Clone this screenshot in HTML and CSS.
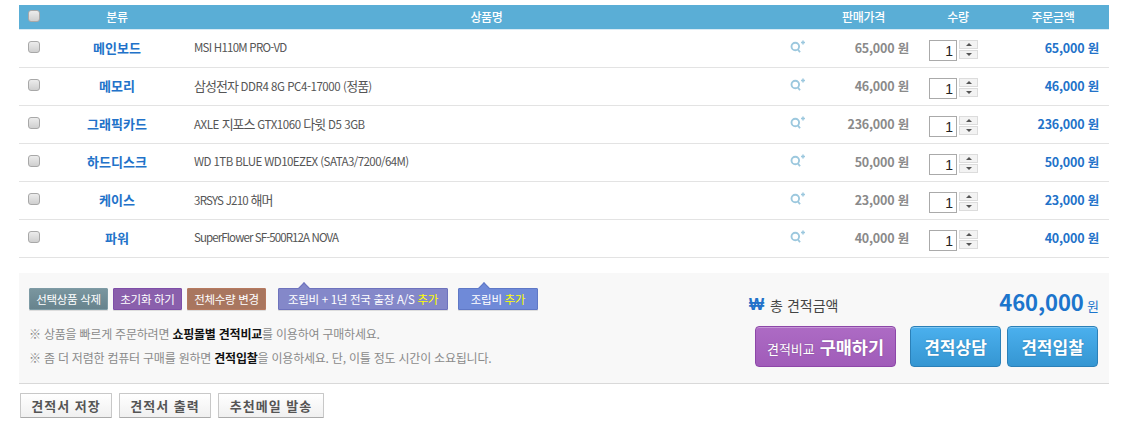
FILE: index.html
```html
<!DOCTYPE html>
<html lang="ko">
<head>
<meta charset="utf-8">
<title>견적서</title>
<link rel="stylesheet" href="styles.css">
</head>
<body>
<main class="page">
  <div class="row head">
    <div class="c"><input type="checkbox" class="chk" aria-label="전체 선택"></div>
    <div class="c">분류</div>
    <div class="c">상품명</div>
    <div></div>
    <div class="c">판매가격</div>
    <div class="c">수량</div>
    <div class="c">주문금액</div>
  </div>

  <div class="row item">
    <div class="c top"><input type="checkbox" class="chk"></div>
    <div class="c cat">메인보드</div>
    <div class="name">MSI H110M PRO-VD</div>
    <div class="c top"><svg class="zoom" viewBox="0 0 16 14"><circle cx="5.3" cy="6.5" r="3.8" /><path d="M7.8 9.3L10 12.2"/><path class="plus" d="M11 2.5H15M13 .5V4.5"/></svg></div>
    <div class="price">65,000 원</div>
    <div class="qty"><input class="num" value="1"><div class="spin"><span class="up"></span><span class="down"></span></div></div>
    <div class="total">65,000 원</div>
  </div>
  <div class="row item">
    <div class="c top"><input type="checkbox" class="chk"></div>
    <div class="c cat">메모리</div>
    <div class="name loose"><span class="ko">삼성전자</span> DDR4 8G PC4-17000 (<span class="ko">정품</span>)</div>
    <div class="c top"><svg class="zoom" viewBox="0 0 16 14"><circle cx="5.3" cy="6.5" r="3.8" /><path d="M7.8 9.3L10 12.2"/><path class="plus" d="M11 2.5H15M13 .5V4.5"/></svg></div>
    <div class="price">46,000 원</div>
    <div class="qty"><input class="num" value="1"><div class="spin"><span class="up"></span><span class="down"></span></div></div>
    <div class="total">46,000 원</div>
  </div>
  <div class="row item">
    <div class="c top"><input type="checkbox" class="chk"></div>
    <div class="c cat">그래픽카드</div>
    <div class="name loose">AXLE <span class="ko">지포스</span> GTX1060 <span class="ko">다윗</span> D5 3GB</div>
    <div class="c top"><svg class="zoom" viewBox="0 0 16 14"><circle cx="5.3" cy="6.5" r="3.8" /><path d="M7.8 9.3L10 12.2"/><path class="plus" d="M11 2.5H15M13 .5V4.5"/></svg></div>
    <div class="price">236,000 원</div>
    <div class="qty"><input class="num" value="1"><div class="spin"><span class="up"></span><span class="down"></span></div></div>
    <div class="total">236,000 원</div>
  </div>
  <div class="row item">
    <div class="c top"><input type="checkbox" class="chk"></div>
    <div class="c cat">하드디스크</div>
    <div class="name caps">WD 1TB BLUE WD10EZEX (SATA3/7200/64M)</div>
    <div class="c top"><svg class="zoom" viewBox="0 0 16 14"><circle cx="5.3" cy="6.5" r="3.8" /><path d="M7.8 9.3L10 12.2"/><path class="plus" d="M11 2.5H15M13 .5V4.5"/></svg></div>
    <div class="price">50,000 원</div>
    <div class="qty"><input class="num" value="1"><div class="spin"><span class="up"></span><span class="down"></span></div></div>
    <div class="total">50,000 원</div>
  </div>
  <div class="row item">
    <div class="c top"><input type="checkbox" class="chk"></div>
    <div class="c cat">케이스</div>
    <div class="name">3RSYS J210 <span class="ko">해머</span></div>
    <div class="c top"><svg class="zoom" viewBox="0 0 16 14"><circle cx="5.3" cy="6.5" r="3.8" /><path d="M7.8 9.3L10 12.2"/><path class="plus" d="M11 2.5H15M13 .5V4.5"/></svg></div>
    <div class="price">23,000 원</div>
    <div class="qty"><input class="num" value="1"><div class="spin"><span class="up"></span><span class="down"></span></div></div>
    <div class="total">23,000 원</div>
  </div>
  <div class="row item">
    <div class="c top"><input type="checkbox" class="chk"></div>
    <div class="c cat">파워</div>
    <div class="name tight">SuperFlower SF-500R12A NOVA</div>
    <div class="c top"><svg class="zoom" viewBox="0 0 16 14"><circle cx="5.3" cy="6.5" r="3.8" /><path d="M7.8 9.3L10 12.2"/><path class="plus" d="M11 2.5H15M13 .5V4.5"/></svg></div>
    <div class="price">40,000 원</div>
    <div class="qty"><input class="num" value="1"><div class="spin"><span class="up"></span><span class="down"></span></div></div>
    <div class="total">40,000 원</div>
  </div>

  <section class="panel">
    <div class="left">
      <div class="actions">
        <button class="btn slate">선택상품 삭제</button>
        <button class="btn purple">초기화 하기</button>
        <button class="btn brown">전체수량 변경</button>
        <button class="btn lav notch first">조립비 + 1년 전국 출장 A/S <em>추가</em></button>
        <button class="btn blue notch">조립비 <em>추가</em></button>
      </div>
      <p class="note">※ 상품을 빠르게 주문하려면 <b>쇼핑몰별 견적비교</b>를 이용하여 구매하세요.</p>
      <p class="note">※ 좀 더 저렴한 컴퓨터 구매를 원하면 <b>견적입찰</b>을 이용하세요. 단, 이틀 정도 시간이 소요됩니다.</p>
    </div>
    <div class="right">
      <div class="sum">
        <div class="sum-label"><span class="won">₩</span> 총 견적금액</div>
        <div class="sum-value"><strong>460,000</strong> <span>원</span></div>
      </div>
      <div class="cta">
        <button class="big violet"><small>견적비교</small> 구매하기</button>
        <button class="big sky wide">견적상담</button>
        <button class="big sky">견적입찰</button>
      </div>
    </div>
  </section>

  <div class="foot">
    <button class="gray">견적서 저장</button>
    <button class="gray">견적서 출력</button>
    <button class="gray">추천메일 발송</button>
  </div>
</main>
</body>
</html>
```
FILE: styles.css
```css
* { box-sizing: border-box; }
html, body { margin: 0; background: #fff; }
body { font-family: "Noto Sans CJK KR", "Noto Sans", sans-serif; font-size: 12px; color: #555; }
.page { width: 1090px; margin-left: 19px; padding-top: 5px; }
button, input { font-family: inherit; }

.row { display: grid; grid-template-columns: 30px 136px 603px 20px 111px 78px 112px; align-items: center; }
.head { height: 25px; background: #5aaed6; border-bottom: 1px solid #d8eaf4; color: #fff; font-weight: 500; letter-spacing: -.3px; }
.item { height: 38px; border-bottom: 1px solid #e3e3e3; }
.c { display: flex; justify-content: center; align-items: center; }
.top { margin-top: -4px; }
.head .c { margin-top: -2px; }
.chk { appearance: none; -webkit-appearance: none; width: 12px; height: 12px; margin: 0; border: 1px solid #a8a8a8; border-radius: 3px; background: linear-gradient(#ececec, #cfcfcf); }
.cat { color: #2272c9; font-weight: 700; font-size: 13px; margin-top: -3px; }
.name { padding-left: 9px; font-size: 11.5px; letter-spacing: -.75px; color: #555; margin-top: -3px; white-space: nowrap; }
.name.loose { letter-spacing: -.45px; }
.name.caps { letter-spacing: -.56px; }
.name.tight { letter-spacing: -.9px; }
.name .ko { font-size: 13px; letter-spacing: -1px; }
.zoom { width: 16px; height: 14px; fill: none; stroke: #9cc8de; stroke-width: 1.9; }
.zoom .plus { stroke-width: 1.5; }
.price, .total { text-align: right; font-weight: 700; font-size: 12.5px; letter-spacing: -.2px; padding-right: 10px; margin-top: -3px; white-space: nowrap; }
.price { color: #8a8a8a; }
.total { color: #2272c9; }
.qty { display: flex; gap: 2px; padding-left: 10px; height: 21px; margin-top: 4px; }
.num { width: 28px; height: 21px; border: 1px solid #aaa; padding: 0 3px 0 0; text-align: right; font-family: "Liberation Sans", sans-serif; font-size: 14px; color: #222; background: #fff; border-radius: 0; outline: none; }
.spin { display: flex; flex-direction: column; gap: 1px; }
.spin span { display: flex; align-items: center; justify-content: center; width: 19px; height: 9px; border: 1px solid #dcdcdc; background: #f3f3f3; }
.up::after, .down::after { content: ""; border-left: 3px solid transparent; border-right: 3px solid transparent; }
.up::after { border-bottom: 3px solid #555; }
.down::after { border-top: 3px solid #555; }

.panel { display: flex; justify-content: space-between; height: 111px; margin-top: 15px; padding: 15px 11px 0 10px; background: #f8f8f8; border-bottom: 1px solid #d9d9d9; }
.actions { display: flex; margin-bottom: 15px; }
.btn { height: 22px; padding: 0; margin-right: 5px; border: 1px solid; border-radius: 1px; color: #fff; font-size: 11.5px; letter-spacing: -.3px; white-space: nowrap; position: relative; box-shadow: 0 1px 0 #ddd; }
.btn em { font-style: normal; color: #ff0; }
.slate { width: 79px; background: linear-gradient(#7a969f, #67838d); border-color: #7e9ba5; }
.purple { width: 69px; background: #8a5fac; border-color: #7f4fa8; }
.brown { width: 79px; background: #a9765f; border-color: #b67a60; }
.lav { width: 170px; background: #8488c9; border-color: #6e73bd; }
.blue { width: 80px; background: #6f8ad8; border-color: #5f78c6; margin-right: 0; }
.first { margin-left: 7px; margin-right: 10px; }
.notch::before { content: ""; position: absolute; top: -5px; width: 7px; height: 7px; background: inherit; border: 1px solid; border-color: inherit; border-right: 0; border-bottom: 0; transform: rotate(45deg); }
.first.notch::before { left: 21px; }
.blue.notch::before { left: 21px; }
.note { margin: 0 0 7px; height: 17px; line-height: 17px; font-size: 12px; letter-spacing: -.22px; color: #8a8a8a; white-space: nowrap; }
.note b { color: #111; font-weight: 700; }

.right { width: 349px; }
.sum { display: flex; justify-content: space-between; align-items: center; height: 28px; margin-bottom: 10px; }
.sum-label { font-size: 14px; color: #444; margin-top: 6px; display: flex; align-items: center; gap: 6px; }
.won { font-family: "Liberation Sans", sans-serif; color: #2272c9; font-weight: 700; font-size: 16px; }
.sum-value { color: #1c75cc; font-size: 12px; margin: -2px -1px 0 0; }
.sum-value strong { font-size: 22px; font-weight: 700; letter-spacing: -.1px; }
.sum-value span { font-size: 13px; }
.cta { display: flex; margin-left: 6px; }
.big { height: 41px; border-radius: 4px; color: #fff; font-size: 17px; font-weight: 700; padding: 0; white-space: nowrap; text-shadow: 0 0 2px rgba(0,0,0,.2); box-shadow: inset 0 1px 0 rgba(255,255,255,.3); }
.big small { font-size: 13px; font-weight: 400; }
.violet { width: 141px; background: linear-gradient(#ad6bc4, #a05cb9); border: 1px solid #8d47a8; margin-right: 14px; font-size: 17.5px; }
.sky { width: 91px; background: linear-gradient(#4bb0ee, #3596d2); border: 1px solid #2b80b8; }
.wide { margin-right: 6px; }

.foot { display: flex; gap: 7px; margin: 9px 0 0 1px; }
.gray { height: 25px; width: 92px; padding: 0; background: linear-gradient(#fff, #f0f0f0); border: 1px solid #c8c8c8; border-bottom-color: #aaa; border-radius: 1px; color: #555; font-size: 13px; font-weight: 700; letter-spacing: 1px; white-space: nowrap; }
.gray:last-child { width: 106px; }
```
